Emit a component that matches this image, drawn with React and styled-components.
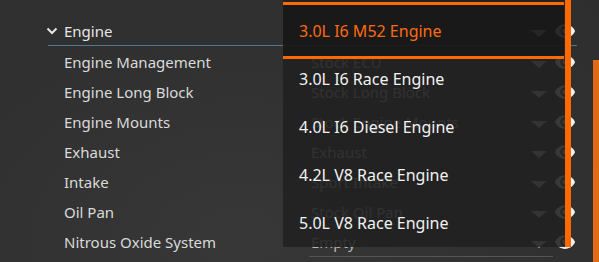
import styled, { createGlobalStyle } from "styled-components";

const Global = createGlobalStyle`
  html, body {
    margin: 0;
    padding: 0;
    background: #323232;
    font-family: "Noto Sans", "Open Sans", sans-serif;
  }
`;

const Page = styled.div`
  display: flex;
  width: 599px;
  height: 262px;
  overflow: hidden;
  background: radial-gradient(
    ellipse at 40% 90%,
    #373737 0%,
    #313131 55%,
    #2e2e2e 100%
  );
`;

const Content = styled.div`
  position: relative;
  width: 593px;
  height: 100%;
`;

const Track = styled.div`
  width: 6px;
  height: 100%;
  display: flex;
  flex-direction: column;
  padding-top: 60px;
  box-sizing: border-box;
`;

const Thumb = styled.div`
  flex: 1;
  background: #e06a1a;
`;

const List = styled.div`
  display: flex;
  flex-direction: column;
  padding-top: 16px;
`;

const Header = styled.div`
  display: grid;
  grid-template-columns: 261px 244px 24px;
  align-items: center;
  height: 29px;
  margin-left: 48px;
  width: 529px;
  border-bottom: 1px solid #4d7896;
  margin-bottom: 1px;
`;

const HeaderLabel = styled.div`
  display: flex;
  align-items: center;
  gap: 6px;
  margin-left: -2px;
  color: #e6e6e6;
  font-size: 15px;
`;

const Row = styled.div`
  display: grid;
  grid-template-columns: 245px 244px 24px;
  align-items: center;
  height: 30px;
  padding-left: 64px;
`;

const Label = styled.div`
  color: #dadada;
  font-size: 15px;
  white-space: nowrap;
`;

const Field = styled.div`
  display: flex;
  align-items: center;
  justify-content: space-between;
  height: 100%;
  box-sizing: border-box;
  padding: 0 6px 0 2px;
  border-bottom: ${(p) => (p.$line ? "1px solid #555" : "none")};
  color: #b8b8b8;
  font-size: 15px;
`;

const Eye = styled.div`
  display: flex;
  align-items: center;
  justify-content: center;
  color: #f0f0f0;
`;

const Dropdown = styled.div`
  position: absolute;
  left: 283px;
  top: 0;
  width: 288px;
  height: 247px;
  display: flex;
  gap: 1px;
  background: rgba(33, 33, 33, 0.89);
`;

const Options = styled.div`
  flex: 1;
  display: flex;
  flex-direction: column;
  padding-top: 7px;
`;

const Bar = styled.div`
  width: 6px;
  background: #ff6a00;
`;

const Option = styled.div`
  display: flex;
  align-items: center;
  height: 48px;
  padding-left: 16px;
  box-sizing: border-box;
  font-size: 16px;
  color: #f2f2f2;
  white-space: nowrap;
  ${(p) =>
    p.$selected &&
    `
    height: 57px;
    margin: -5px 0 -4px;
    border-top: 3px solid #ff6a00;
    border-bottom: 3px solid #ff6a00;
    background: rgba(0, 0, 0, 0.25);
    color: #ff6a10;
  `}
`;

const Chevron = () => (
  <svg width="12" height="8" viewBox="0 0 12 8">
    <path d="M1.5 1.5 L6 6 L10.5 1.5" fill="none" stroke="#e6e6e6" strokeWidth="2" />
  </svg>
);

const Caret = () => (
  <svg width="16" height="8" viewBox="0 0 16 8" style={{ marginTop: 6 }}>
    <path d="M0 0 H16 L8 7 Z" fill="#c4c4c4" />
  </svg>
);

const EyeIcon = () => (
  <svg width="22" height="22" viewBox="0 0 24 24">
    <path
      fill="currentColor"
      d="M12 4.5C7 4.5 2.73 7.61 1 12c1.73 4.39 6 7.5 11 7.5s9.27-3.11 11-7.5c-1.73-4.39-6-7.5-11-7.5zM12 17c-2.76 0-5-2.24-5-5s2.24-5 5-5 5 2.24 5 5-2.24 5-5 5zm0-8c-1.66 0-3 1.34-3 3s1.34 3 3 3 3-1.34 3-3-1.34-3-3-3z"
    />
  </svg>
);

const parts = [
  ["Engine Management", "Stock ECU"],
  ["Engine Long Block", "Stock Long Block"],
  ["Engine Mounts", "Stock Engine Mounts"],
  ["Exhaust", "Exhaust"],
  ["Intake", "Sport Intake"],
  ["Oil Pan", "Stock Oil Pan"],
  ["Nitrous Oxide System", "Empty"],
];

const options = [
  "3.0L I6 M52 Engine",
  "3.0L I6 Race Engine",
  "4.0L I6 Diesel Engine",
  "4.2L V8 Race Engine",
  "5.0L V8 Race Engine",
];

export default function App() {
  return (
    <>
      <Global />
      <Page>
        <Content>
          <List>
            <Header>
              <HeaderLabel>
                <Chevron />
                Engine
              </HeaderLabel>
              <Field>
                <span />
                <Caret />
              </Field>
              <Eye>
                <EyeIcon />
              </Eye>
            </Header>
            {parts.map(([name, value], i) => (
              <Row key={name}>
                <Label>{name}</Label>
                <Field $line={i === parts.length - 1}>
                  <span>{value}</span>
                  <Caret />
                </Field>
                <Eye>
                  <EyeIcon />
                </Eye>
              </Row>
            ))}
          </List>
          <Dropdown>
            <Options>
              {options.map((o, i) => (
                <Option key={o} $selected={i === 0}>
                  {o}
                </Option>
              ))}
            </Options>
            <Bar />
          </Dropdown>
        </Content>
        <Track>
          <Thumb />
        </Track>
      </Page>
    </>
  );
}
